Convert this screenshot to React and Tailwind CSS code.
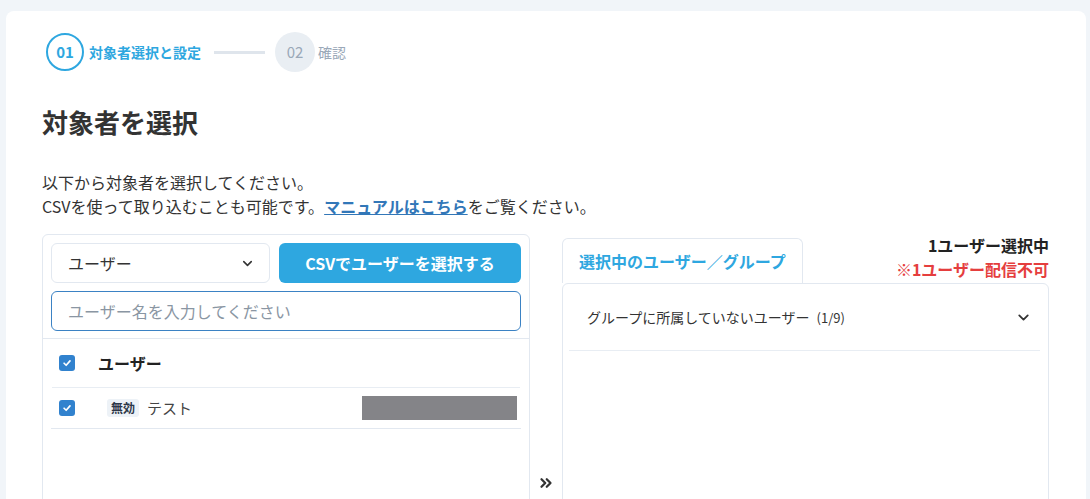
import { ChevronDown, ChevronsRight } from "lucide-react";

const font = { fontFamily: '"Noto Sans CJK JP", "Noto Sans", sans-serif' };

function Check() {
  return (
    <span className="flex h-4 w-4 items-center justify-center rounded-[3px] bg-[#3182ce]">
      <svg width="10" height="10" viewBox="0 0 12 12" fill="none">
        <path d="M2.5 6.3 L5 8.7 L9.6 3.4" stroke="white" strokeWidth="2" strokeLinecap="round" strokeLinejoin="round" />
      </svg>
    </span>
  );
}

export default function App() {
  return (
    <div className="min-h-screen bg-[#f1f5f9] pt-[11px] pl-[6px] pr-[4px]" style={font}>
      <div className="w-[1080px] rounded-lg bg-white pl-[36px] pr-[37px] pt-[21px] text-[#333]">
        {/* stepper */}
        <div className="flex items-center pl-[4px]">
          <div className="flex h-[38px] w-[38px] items-center justify-center rounded-full border-2 border-[#2ea7e0] text-[15px] font-bold text-[#2ea7e0]">
            01
          </div>
          <span className="ml-[5px] text-[14px] font-bold text-[#2ea7e0]">対象者選択と設定</span>
          <div className="ml-[13px] mr-[10px] h-[3px] w-[51px] bg-[#dfe5ec]" />
          <div className="flex h-[40px] w-[40px] items-center justify-center rounded-full bg-[#e9eef3] text-[15px] text-[#9aa8b8]">
            02
          </div>
          <span className="ml-[3px] text-[14px] text-[#9aa8b8]">確認</span>
        </div>

        <h1 className="mt-[33px] text-[26px] font-bold leading-[34px] text-[#333]">対象者を選択</h1>

        <div className="mt-[31px] text-[16px] leading-[24px] text-[#333]">
          <p>以下から対象者を選択してください。</p>
          <p>
            CSVを使って取り込むことも可能です。
            <a className="font-bold text-[#3277b8] underline">マニュアルはこちら</a>
            をご覧ください。
          </p>
        </div>

        <div className="mt-[16px] flex">
          {/* left panel */}
          <div className="h-[498px] w-[488px] rounded-t-md border border-[#e2e8f0]">
            <div className="px-[8px] pt-[8px] pb-[7px]">
              <div className="flex gap-[9px]">
                <div className="flex h-[40px] w-[219px] items-center justify-between rounded-md border border-[#e2e8f0] pl-[16px] pr-[14px] text-[16px] text-[#333]">
                  <span>ユーザー</span>
                  <ChevronDown size={15} strokeWidth={2.5} className="text-[#333]" />
                </div>
                <button className="h-[40px] w-[242px] rounded-md bg-[#2ea7e0] text-[16px] font-bold text-white">
                  CSVでユーザーを選択する
                </button>
              </div>
              <div className="mt-[8px] flex h-[40px] items-center rounded-md border border-[#3b82c4] px-[16px] text-[16px] text-[#8a96a3]">
                ユーザー名を入力してください
              </div>
            </div>
            <div className="border-t border-[#e2e8f0]">
              <div className="mx-[9px] flex h-[49px] items-center border-b border-[#e8edf3] pl-[7px]">
                <Check />
                <span className="ml-[23px] text-[16px] font-bold text-[#222]">ユーザー</span>
              </div>
              <div className="mx-[8px] flex h-[41px] items-center border-b border-[#e2e8f0] pl-[8px]">
                <Check />
                <span className="ml-[32px] rounded-[3px] bg-[#edf2f7] px-[4px] text-[12px] font-bold leading-[18px] text-[#2d3748]">無効</span>
                <span className="ml-[8px] text-[15px] text-[#444]">テスト</span>
                <div className="ml-auto mr-[4px] h-[24px] w-[155px] bg-[#848488]" />
              </div>
            </div>
          </div>

          {/* arrow */}
          <div className="flex h-[498px] w-[32px] items-center justify-center">
            <ChevronsRight size={18} strokeWidth={3} className="text-[#333]" />
          </div>

          {/* right */}
          <div className="w-[487px]">
            <div className="mt-[4px] flex items-start justify-between">
              <div className="flex h-[45px] w-[241px] items-center rounded-t-md border border-b-0 border-[#e2e8f0] pl-[16px] text-[16px] font-bold text-[#2ea7e0]">
                選択中のユーザー／グループ
              </div>
              <div className="-mt-[5px] text-right text-[16px] font-bold leading-[24px]">
                <p className="text-[#222]">1ユーザー選択中</p>
                <p className="text-[#e53e3e]">※1ユーザー配信不可</p>
              </div>
            </div>
            <div className="h-[498px] rounded-md border border-[#e2e8f0]">
              <div className="ml-[6px] mr-[8px] flex h-[67px] items-center justify-between border-b border-[#e8edf3] pl-[18px] pr-[8px]">
                <span className="text-[14px] text-[#333]">
                  グループに所属していないユーザー <span className="ml-[4px] text-[13px]">(1/9)</span>
                </span>
                <ChevronDown size={17} strokeWidth={2.5} className="text-[#333]" />
              </div>
            </div>
          </div>
        </div>
      </div>
    </div>
  );
}
